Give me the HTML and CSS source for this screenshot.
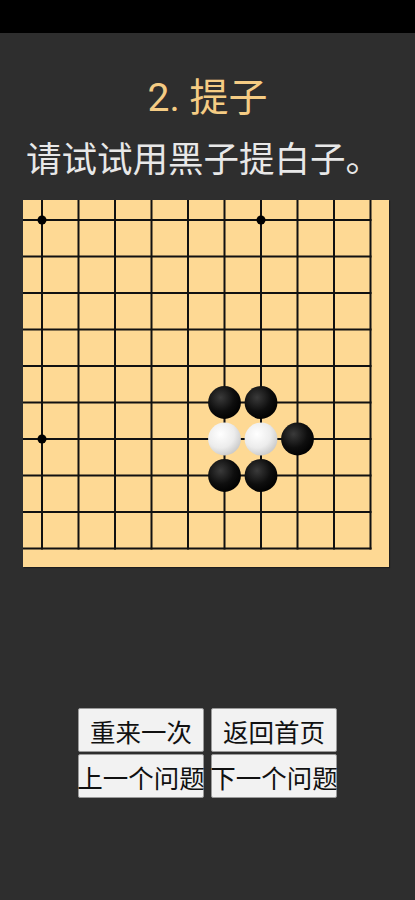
FILE: index.html
```html
<!DOCTYPE html>
<html lang="zh-CN">
<head>
    <meta charset="UTF-8">
    <meta name="viewport" content="width=device-width, initial-scale=1.0">
    <title>提子</title>
    <link rel="stylesheet" href="styles.css">
</head>
<body>
    <div class="statusBar"></div>

    <h1 class="title">2. 提子</h1>
    <p class="desc">请试试用黑子提白子。</p>

    <div class="board">
        <svg width="366" height="367" viewBox="0 0 366 367">
            <defs>
                <radialGradient id="blackStone" cx="38%" cy="35%" r="70%">
                    <stop offset="0%" stop-color="#3a3a3a"/>
                    <stop offset="60%" stop-color="#0e0e0e"/>
                    <stop offset="100%" stop-color="#000"/>
                </radialGradient>
                <radialGradient id="whiteStone" cx="38%" cy="35%" r="70%">
                    <stop offset="0%" stop-color="#ffffff"/>
                    <stop offset="60%" stop-color="#ececec"/>
                    <stop offset="100%" stop-color="#c8c8c8"/>
                </radialGradient>
            </defs>
            <g id="grid" stroke="#111" stroke-width="2"></g>
            <g id="stars" fill="#000"></g>
            <g id="stones"></g>
        </svg>
    </div>

    <div class="buttons">
        <button class="btn">重来一次</button>
        <button class="btn">返回首页</button>
        <button class="btn">上一个问题</button>
        <button class="btn">下一个问题</button>
    </div>

    <script>
        // 棋盘: 19路棋盘的右下角 (第9~18路)
        const SVG_NS = "http://www.w3.org/2000/svg";
        const start = 19;  // 第一条线的位置
        const gap = 36.5;  // 线间距
        const lines = 10;
        const end = start + gap * (lines - 1);

        const grid = document.querySelector("#grid");
        const stars = document.querySelector("#stars");
        const stones = document.querySelector("#stones");

        function make(tag, attrs) {
            const el = document.createElementNS(SVG_NS, tag);
            for (const key in attrs) el.setAttribute(key, attrs[key]);
            return el;
        }

        for (let i = 0; i < lines; i++) {
            const p = start + gap * i;
            const py = p + 1;
            grid.appendChild(make("line", { x1: 0, y1: py, x2: end + 1, y2: py }));
            grid.appendChild(make("line", { x1: p, y1: 0, x2: p, y2: end + 2 }));
        }

        // 星位
        [[0, 0], [6, 0], [0, 6], [6, 6]].forEach(([c, r]) => {
            stars.appendChild(make("circle", { cx: start + gap * c, cy: start + 1 + gap * r, r: 4.5 }));
        });

        // 棋子: [列, 行, 颜色]
        const position = [
            [5, 5, "b"], [6, 5, "b"],
            [5, 6, "w"], [6, 6, "w"], [7, 6, "b"],
            [5, 7, "b"], [6, 7, "b"]
        ];
        position.forEach(([c, r, color]) => {
            stones.appendChild(make("circle", {
                cx: start + gap * c,
                cy: start + 1 + gap * r,
                r: 16.4,
                fill: color === "b" ? "url(#blackStone)" : "url(#whiteStone)"
            }));
        });
    </script>
</body>
</html>
```

FILE: styles.css
```css
body {
    margin: 0;
    background-color: #2e2e2e;
    font-family: "Noto Sans CJK SC", "Roboto", sans-serif;
}
.statusBar {
    height: 33px;
    background-color: #000;
}
.title {
    margin: 42px 0 0;
    font-size: 39px;
    line-height: 46px;
    font-weight: normal;
    text-align: center;
    color: #f5cc84;
    font-family: "Roboto", "Noto Sans CJK SC", sans-serif;
}
.desc {
    margin: 15px 0 0 26px;
    font-size: 35.5px;
    line-height: 42px;
    color: #e8e8e8;
}
.board {
    width: 366px;
    height: 367px;
    margin: 22px 0 0 23px;
    background-color: #fed994;
    box-shadow: 1px 1px 1px rgba(0, 0, 0, 0.35);
}
.board svg {
    display: block;
}
.buttons {
    display: grid;
    grid-template-columns: 126px 126px;
    column-gap: 7px;
    row-gap: 2px;
    justify-content: center;
    margin-top: 141px;
}
.btn {
    height: 44px;
    padding: 0;
    display: flex;
    justify-content: center;
    align-items: center;
    white-space: nowrap;
    background-color: #f2f2f2;
    border: 1px solid #9a9a9a;
    border-radius: 2px;
    color: #111;
    font-family: "Noto Sans CJK SC", sans-serif;
    font-size: 25.5px;
}
```
